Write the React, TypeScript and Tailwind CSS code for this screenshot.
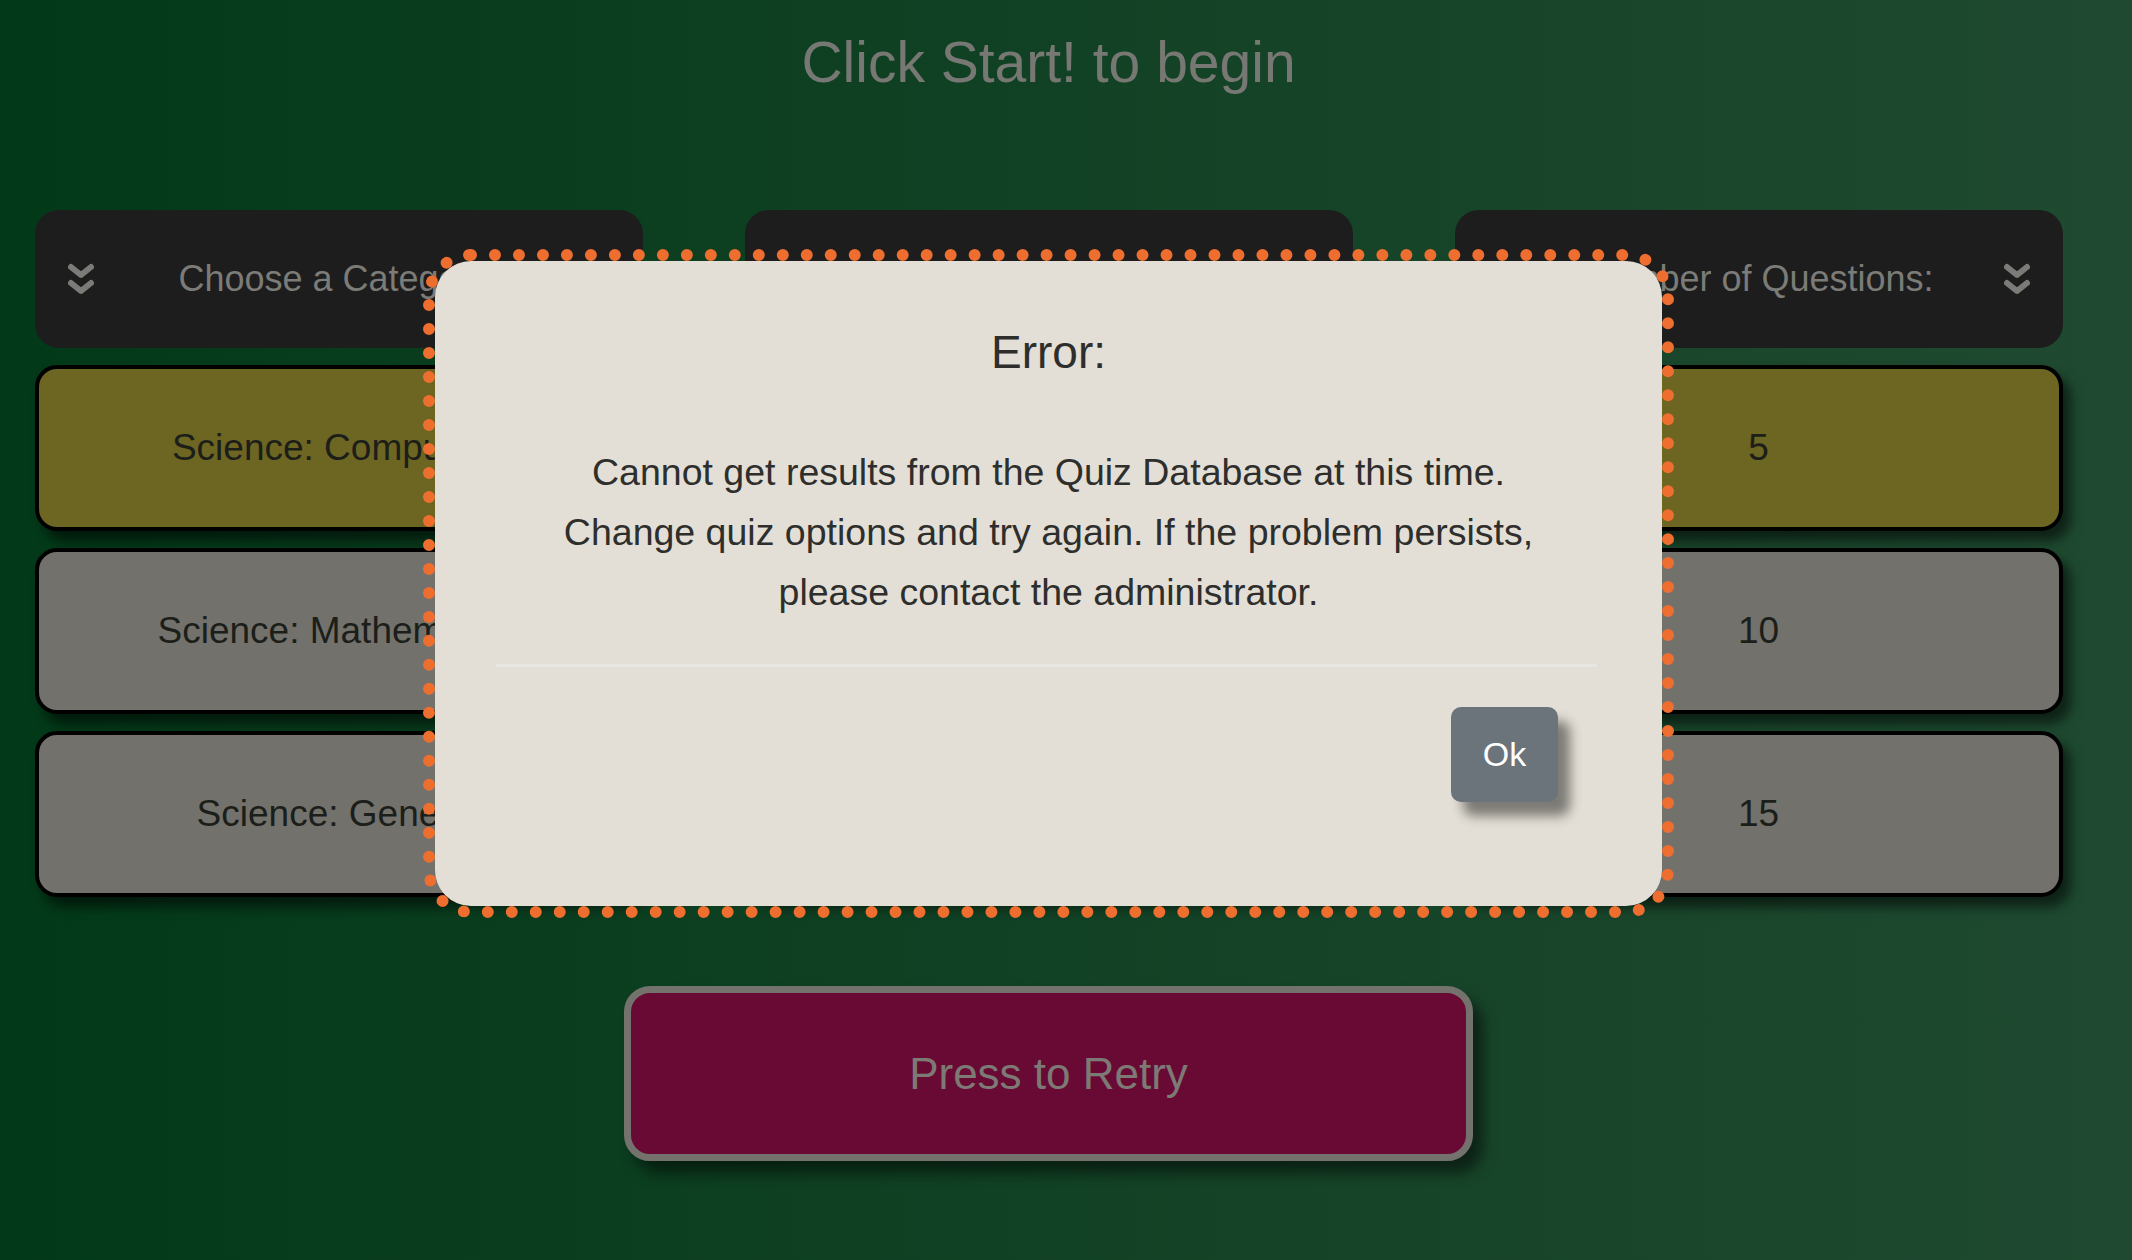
import React from 'react';

interface Column {
  label: string;
  iconSide: 'left' | 'right';
  options: string[];
}

// middle column sits fully behind the error dialog, so its labels are left blank
const columns: Column[] = [
  {
    label: 'Choose a Category:',
    iconSide: 'left',
    options: ['Science: Computers', 'Science: Mathematics', 'Science: General'],
  },
  {
    label: '',
    iconSide: 'left',
    options: ['', '', ''],
  },
  {
    label: 'Number of Questions:',
    iconSide: 'right',
    options: ['5', '10', '15'],
  },
];

function DoubleChevron() {
  return (
    <svg width="26" height="32" viewBox="0 0 26 32" fill="none" className="shrink-0">
      <polyline points="3,4 13,12 23,4" stroke="#7b7b77" strokeWidth="6" strokeLinecap="round" strokeLinejoin="round" />
      <polyline points="3,20 13,28 23,20" stroke="#7b7b77" strokeWidth="6" strokeLinecap="round" strokeLinejoin="round" />
    </svg>
  );
}

function OptionHeader({ label, iconSide }: { label: string; iconSide: 'left' | 'right' }) {
  return (
    <div className="h-[138px] rounded-[24px] bg-[#1d1d1d] flex items-center px-[33px]">
      {iconSide === 'left' ? <DoubleChevron /> : <div className="w-[26px] shrink-0" />}
      <span className="flex-1 text-center text-[36px] text-[#7b7b77]">{label}</span>
      {iconSide === 'right' ? <DoubleChevron /> : <div className="w-[26px] shrink-0" />}
    </div>
  );
}

export default function App() {
  return (
    <div className="relative min-h-screen w-full overflow-hidden bg-linear-to-r from-[#023918] to-[#1f4a31] font-['Liberation_Sans',Arial,sans-serif]">
      <div className="w-[2097px] flex flex-col items-center">
        {/* Title */}
        <h1 className="pt-[28px] text-[57px] leading-[68px] text-[#777873]">Click Start! to begin</h1>

        {/* Option columns */}
        <div className="mt-[114px] flex gap-[102px]">
          {columns.map((col, c) => (
            <div key={c} className="w-[608px] flex flex-col gap-[17px]">
              <OptionHeader label={col.label} iconSide={col.iconSide} />
              {col.options.map((opt, i) => (
                <div
                  key={i}
                  className={`h-[166px] rounded-[22px] border-4 border-black flex items-center justify-center text-[37px] text-[#1b1e19] shadow-[8px_10px_12px_rgba(0,0,0,0.55)] ${
                    i === 0 ? 'bg-[#6d6522]' : 'bg-[#72716c]'
                  }`}
                >
                  {opt}
                </div>
              ))}
            </div>
          ))}
        </div>

        {/* Retry */}
        <button className="mt-[89px] w-[849px] h-[175px] rounded-[26px] border-[7px] border-[#74726d] bg-[#690a35] text-[44px] text-[#7d7a76] shadow-[10px_12px_14px_rgba(0,0,0,0.5)]">
          Press to Retry
        </button>
      </div>

      {/* Error modal */}
      <div className="fixed inset-0 flex justify-center items-start pt-[261px] pr-[35px]">
        <div className="w-[1227px] h-[645px] rounded-[36px] bg-[#e3dfd6] outline-[12px] outline-dotted outline-[#ee6e30] flex flex-col text-[#2e2e2c]">
          <h2 className="pt-[63px] text-center text-[46px] leading-[56px]">Error:</h2>
          <div className="mt-[62px] text-center text-[37.5px] leading-[60px]">
            <p>Cannot get results from the Quiz Database at this time.</p>
            <p>Change quiz options and try again. If the problem persists,</p>
            <p>please contact the administrator.</p>
          </div>
          <div className="mt-[42px] ml-[61px] mr-[65px] border-t-[3px] border-[#e8e6e1]" />
          <div className="flex justify-end pr-[104px] pt-[40px]">
            <button className="w-[107px] h-[95px] rounded-[10px] bg-[#6b737b] text-white text-[34px] shadow-[12px_14px_12px_rgba(0,0,0,0.45)]">
              Ok
            </button>
          </div>
        </div>
      </div>
    </div>
  );
}
